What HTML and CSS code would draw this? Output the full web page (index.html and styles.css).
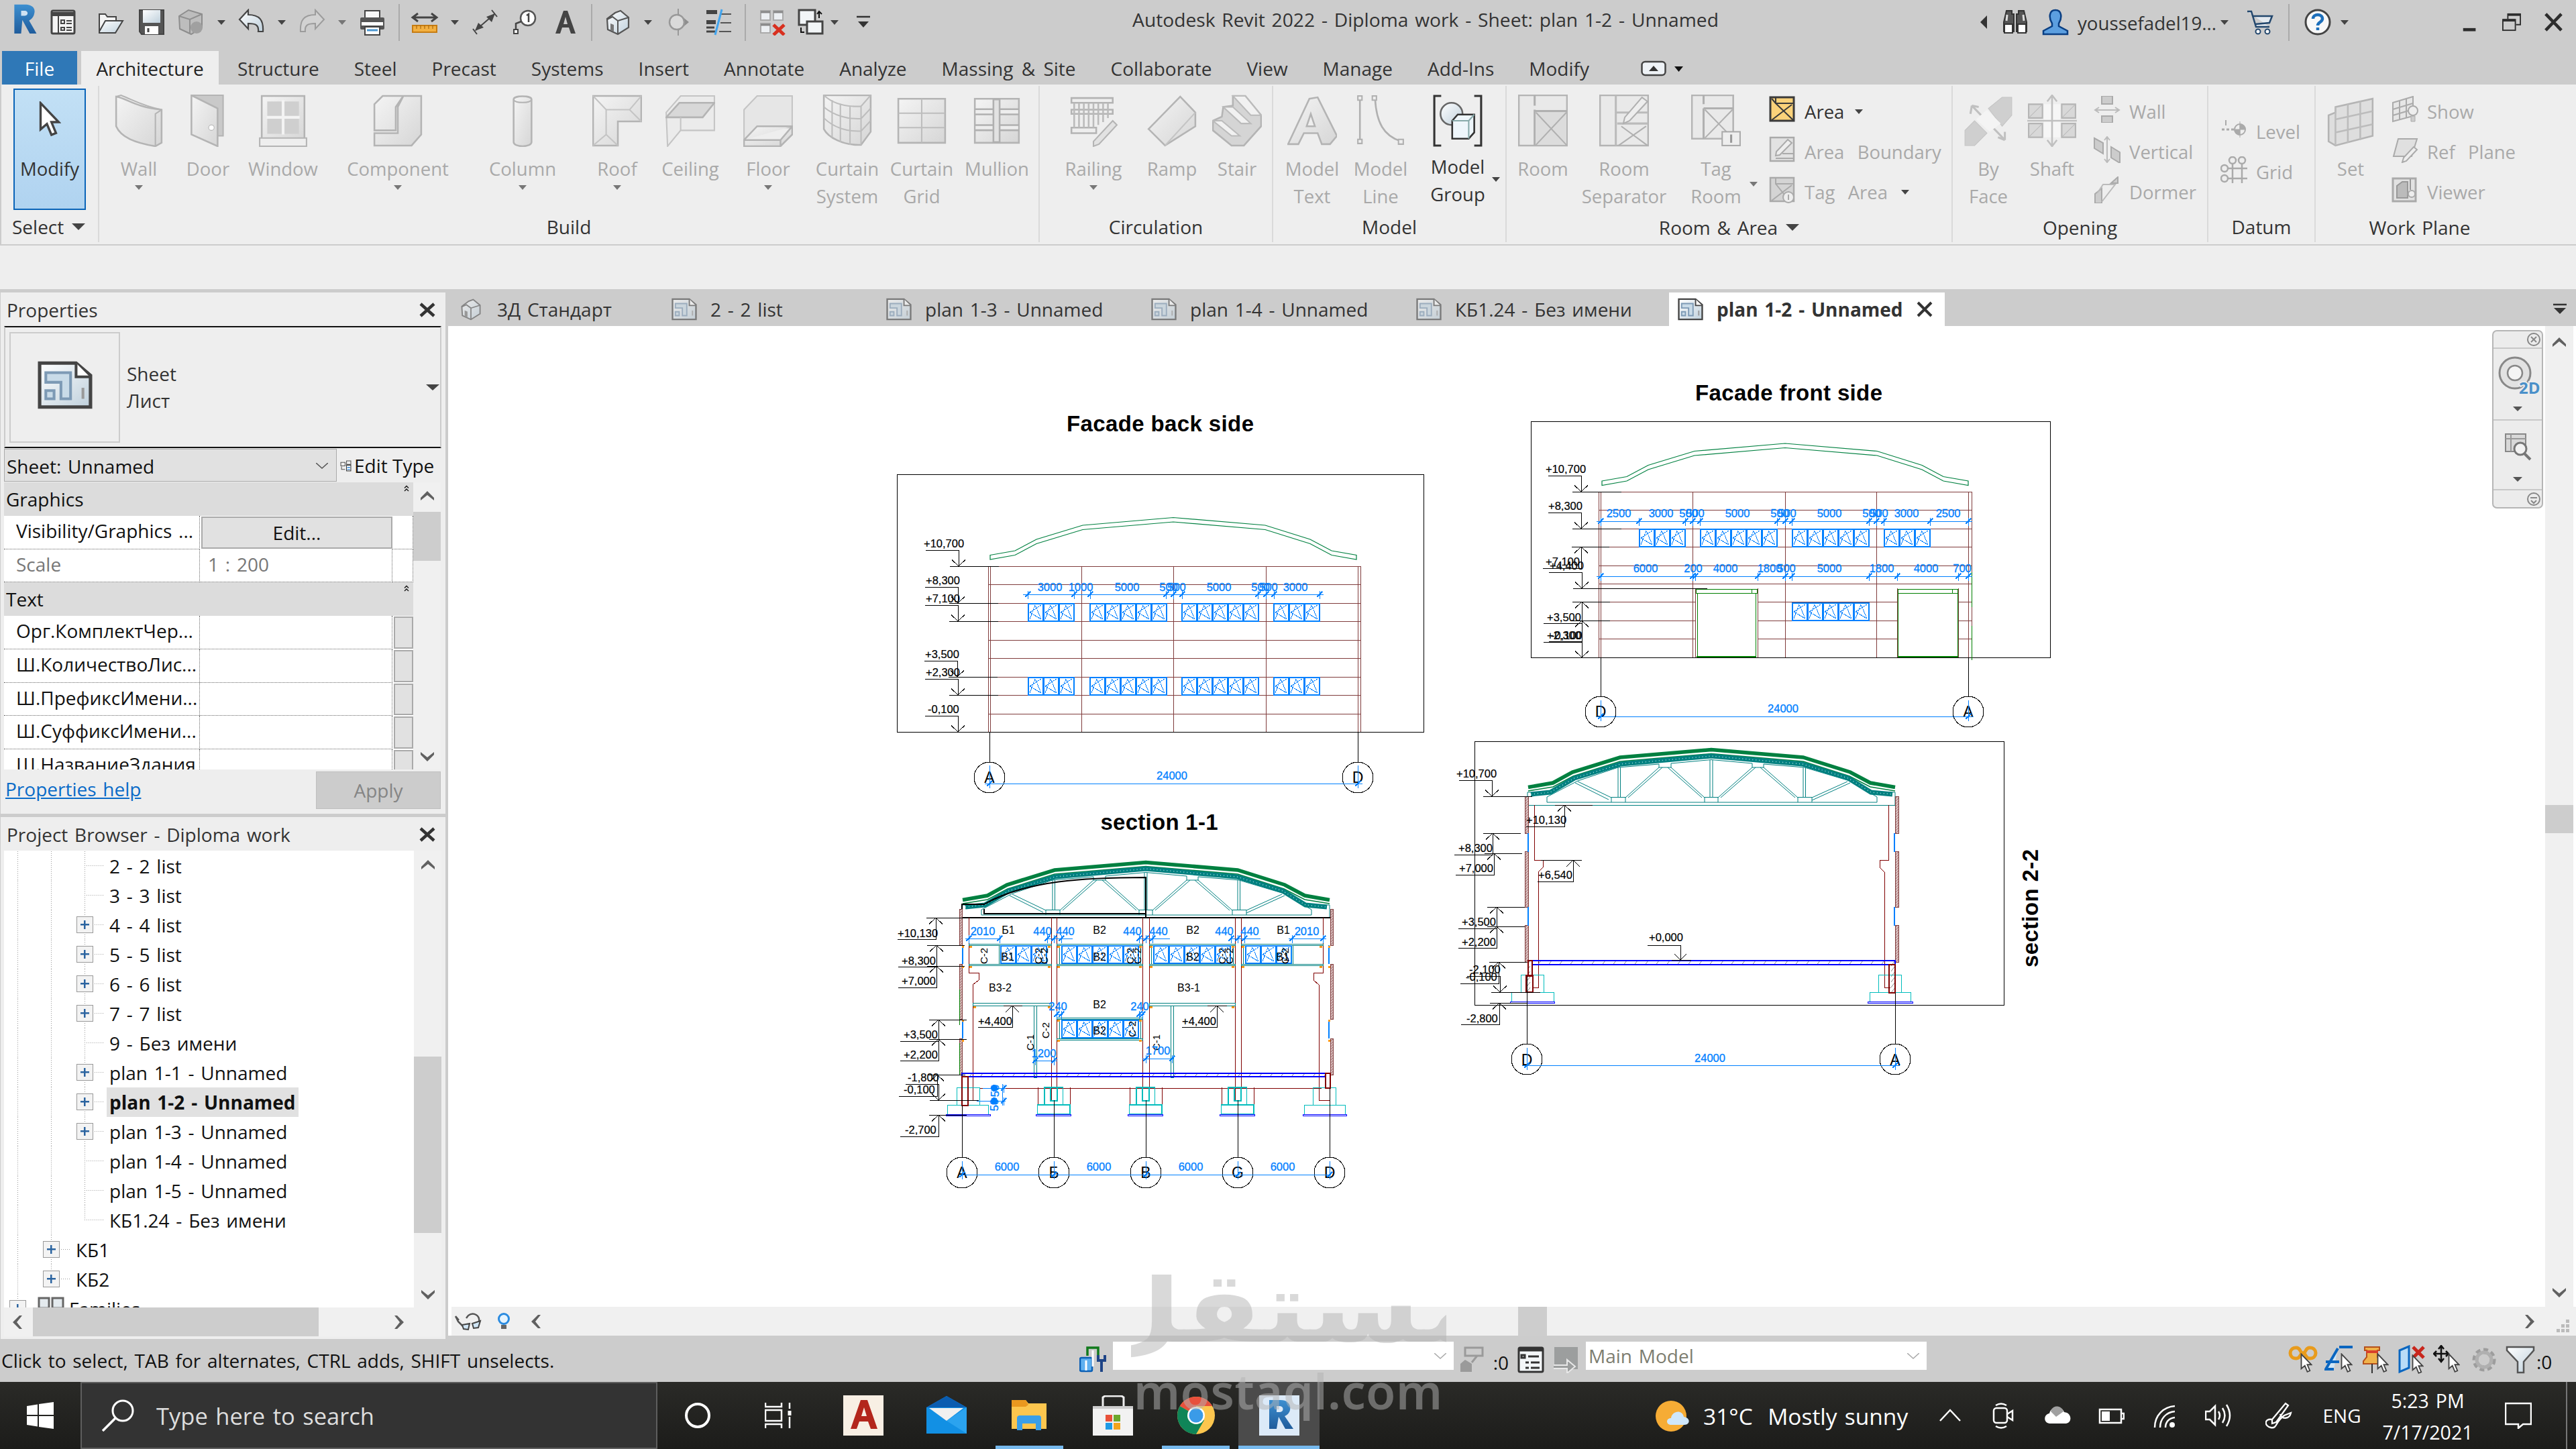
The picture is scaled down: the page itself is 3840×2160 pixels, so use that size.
FILE: index.html
```html
<!DOCTYPE html>
<html lang="en">
<head>
  <meta charset="UTF-8">
  <title>Autodesk Revit 2022 - Diploma work</title>
  <link rel="stylesheet" href="styles.css">
</head>
<body>
  <svg class="defs" width="0" height="0">
    <defs>
      <linearGradient id="gDis" x1="0" y1="0" x2="1" y2="1"><stop offset="0" stop-color="#f4f4f4"/><stop offset="1" stop-color="#d6d6d6"/></linearGradient>
      <linearGradient id="gIce" x1="0" y1="0" x2="1" y2="1"><stop offset="0" stop-color="#ffffff"/><stop offset="1" stop-color="#bfd0dc"/></linearGradient>
      <linearGradient id="gBlue" x1="0" y1="0" x2="0" y2="1"><stop offset="0" stop-color="#3d8fd0"/><stop offset="1" stop-color="#1f5c9c"/></linearGradient>
      <symbol id="sheet" viewBox="0 0 40 36">
        <path d="M1.5 2H28L38.500 11V34H1.500Z" fill="url(#gIce)" stroke="currentColor" stroke-width="2.500"/>
        <path d="M28 2V12H38" fill="#fff" stroke="currentColor" stroke-width="2"/>
        <path d="M6 9H24V28H17V16H6Z M6 22H12V28H6Z" fill="#c9dbe8" stroke="#7d9ab5" stroke-width="2"/>
        <path d="M33 20V28" stroke="#999" stroke-width="2"/>
      </symbol>
      <symbol id="house" viewBox="0 0 40 40">
        <path d="M4 15L16 6L24 3L36 13V28L20 38L5 31Z" fill="url(#gIce)" stroke="#555" stroke-width="2.200"/>
        <path d="M20 38V18L36 13M20 18L12 12L4 16" fill="none" stroke="#555" stroke-width="2"/>
        <path d="M9 22L14 24V34L9 32Z" fill="#777"/>
      </symbol>
      <symbol id="cursor" viewBox="0 0 24 40"><path d="M2 2V31L9 25L14 37L19 35L14 23H22Z" fill="#fff" stroke="#444" stroke-width="2.500"/></symbol>
      <symbol id="chev" viewBox="0 0 20 14"><path d="M0 10L10 0L20 10V14L10 6L0 14Z" fill="#606060"/></symbol>
      <symbol id="fold" viewBox="0 0 8 10"><path d="M1 4.500L4 1.500L7 4.500M1 9L4 6L7 9" fill="none" stroke="#111" stroke-width="1.300"/></symbol>
      <!-- one glazed pane with opening marks -->
      <symbol id="pane" viewBox="0 0 24 28" overflow="visible">
        <rect x="1" y="1" width="22" height="26" fill="#fff" stroke="#0080ff" stroke-width="2.500"/>
        <path d="M3 14L20 3M3 14L20 24M3 24L11 3L20 24" fill="none" stroke="#0080ff" stroke-dasharray="5 1"/>
      </symbol>
      <g id="win3"><use href="#pane" width="24" height="28"/><use href="#pane" x="23" width="24" height="28"/><use href="#pane" x="46" width="24" height="28"/></g>
      <g id="win5"><use href="#win3"/><use href="#pane" x="69" width="24" height="28"/><use href="#pane" x="92" width="24" height="28"/></g>
      <g id="down"><path d="M-49.500 -23.500H0V0M-10 -9.500L0 0L10 -9.500M-13 0H60"/></g>
      <g id="up"><path d="M-57 32H0V0M-10 9.500L0 0L10 9.500M-14 0H42"/></g>
      <g id="tick"><path d="M0 -5V7M-4 4L4 -4" stroke="#0080ff"/><path d="M-4 4L4 -4" stroke="#0080ff" stroke-width="2"/></g>
      <g id="eave" fill="none" stroke="#008040" stroke-width="1.200" shape-rendering="auto">
        <path d="M-273 56L-236 49.500L-204 32.500L-135 11.500L0 0L137 11.500L204 32.500L236 49.500L273 56V62.500L236 56L204 39L137 18L0 6.500L-135 18L-204 39L-236 56L-273 62.500Z"/>
      </g>
      <g id="bubble"><circle r="23" fill="none" stroke="#000"/></g>
      <g id="truss" fill="none" shape-rendering="auto">
        <path d="M-273 58.500L-236 52L-207 36L-136 14L0 2.500L137 14L207 36L237 52L274 58.500" stroke="#008040" stroke-width="5.500"/>
        <path d="M-273 64L-236 58L-206 42L-136 20L0 8.500L137 20L206 42L237 58L274 64" stroke="#008040" stroke-width="1.500"/>
        <path d="M-269 69L-240 66L-204 45L-135 24L0 12L136 24L204 45L238 66L270 69" stroke="#008080" stroke-width="7"/>
        <path d="M-269 69L-240 66L-204 45L-135 24L0 12L136 24L204 45L238 66L270 69" stroke="#a8dada" stroke-width="1.500" stroke-dasharray="1 4"/>
        <g stroke="#008080">
          <path d="M-245 73L-199 49L-139 29L-78 24V29H-60V23L0 17.500L61 23V29H78V24L139 29L206 49L247 73V81H-245Z"/>
          <path d="M-139 29V74M-135.500 29V74M-2 18V74M2 18V74M137 29V74M140.500 29V74"/>
          <path d="M-149 81V73.500H-128V81M-10 81V73.500H10V81M129 81V73.500H150V81"/>
          <path d="M-128 74L-78 29M-124 74L-73 29M-60 29L-10 74M-65 29L-14 74M10 74L61 29M14 74L66 29M78 29L129 74M73 29L125 74M-199 50L-149 74M-203 52L-153 77M150 74L203 50M150 78L207 52"/>
          <path d="M-274 85V66H-245M274 85V66H250"/>
        </g>
      </g>
      <g id="footing" fill="none">
        <path d="M-24 -40V-14M24 -40V-14" stroke="#800000"/>
        <path d="M-14 -14V-40H13.500V-14M-24.500 -14H24V0H-24.500ZM-5 -40V-20H5V-40" stroke="#00bcbc" stroke-width="1.500"/>
        <rect x="-27" y="0" width="52" height="2" stroke="#00f"/>
      </g>
      <pattern id="hatch" width="16" height="8" patternUnits="userSpaceOnUse"><path d="M3 8L9 0" stroke="#888" fill="none"/></pattern>
      <pattern id="brick" width="4" height="4" patternUnits="userSpaceOnUse"><rect width="4" height="4" fill="#d8bcbc"/><path d="M0 4L4 0" stroke="#a07070" fill="none"/></pattern>
    </defs>
  </svg>

  <header class="titlebar">
    <div class="qat">
      <svg class="ico logo" viewBox="0 0 44 50"><path d="M5 2H22C36 2 40 10 37 18C35 25 30 27 29 28L41 49H30L18 27L16 49H5Z" fill="url(#gBlue)"/><path d="M16 12H22C28 12 28 20 22 20H16Z" fill="#cfe2f2"/></svg>
      <svg class="ico" viewBox="0 0 40 40"><rect x="3" y="3" width="34" height="34" rx="2" fill="#f4f4f4" stroke="#444" stroke-width="3"/><path d="M3 8H37" stroke="#444" stroke-width="6"/><path d="M13 8V37" stroke="#444" stroke-width="2"/><path d="M17 17h5v5h-5zM17 28h5v4h-5zM25 18h8M25 22h8M25 28h8M25 32h8" stroke="#444" fill="none" stroke-width="2"/></svg>
      <svg class="ico m14" viewBox="0 0 40 40"><path d="M3 34V8H12L15 12H28V18" fill="#f4f4f4" stroke="#444" stroke-width="2"/><path d="M3 34L12 18H38L27 36H3Z" fill="url(#gIce)" stroke="#444" stroke-width="2"/></svg>
      <svg class="ico m4" viewBox="0 0 40 40"><path d="M2 2H38V38H5L2 34Z" fill="#555" stroke="#444" stroke-width="2"/><rect x="7" y="2" width="26" height="19" fill="url(#gIce)"/><rect x="10" y="26" width="20" height="12" fill="#fff"/><path d="M15 29V35" stroke="#444" stroke-width="3"/></svg>
      <svg class="ico m2" viewBox="0 0 40 40"><path d="M2 11L16 2L36 8V28L20 38L3 30Z" fill="#bdbdbd" stroke="#8d8d8d" stroke-width="2"/><path d="M2 11L18 16L36 8M18 16V37" fill="none" stroke="#909090" stroke-width="2"/><circle cx="28" cy="28" r="9" fill="#a0a0a0"/></svg>
      <i class="tri"></i>
      <svg class="ico" viewBox="0 0 40 40"><path d="M2 16L15 2V9C32 9 38 17 37 34H30C31 25 27 22 15 22V30Z" fill="url(#gIce)" stroke="#444" stroke-width="2.200"/></svg>
      <i class="tri"></i>
      <svg class="ico" viewBox="0 0 40 40"><path d="M38 16L25 2V9C8 9 2 17 3 34H10C9 25 13 22 25 22V30Z" fill="#d2d2d2" stroke="#9c9c9c" stroke-width="2"/></svg>
      <i class="tri dim"></i>
      <svg class="ico" viewBox="0 0 40 40"><path d="M9 14V3H31V14" fill="#f7f7f7" stroke="#444" stroke-width="2"/><rect x="2" y="13" width="36" height="18" rx="2" fill="#555"/><rect x="4" y="20" width="32" height="5" fill="#fff"/><rect x="9" y="27" width="22" height="12" fill="#fff" stroke="#444" stroke-width="2"/><path d="M12 32H28" stroke="#4b97d1" stroke-width="3"/></svg>
      <span class="sep m4"></span>
      <svg class="ico m2" viewBox="0 0 40 40"><path d="M2 13H38M10 7L2 13L10 19M30 7L38 13L30 19" fill="none" stroke="#444" stroke-width="3"/><rect x="2" y="25" width="36" height="10" fill="#f3b041" stroke="#c67c12" stroke-width="2"/><path d="M8 25v5M14 25v5M20 25v5M26 25v5M32 25v5" stroke="#9a5b05"/></svg>
      <i class="tri"></i>
      <svg class="ico" viewBox="0 0 40 40"><path d="M6 32L34 8M2 30L8 38M30 2L38 12" stroke="#444" stroke-width="2"/><path d="M22 12L35 7L30 20ZM18 28L5 33L10 21Z" fill="#444"/></svg>
      <svg class="ico m4" viewBox="0 0 40 40"><circle cx="23" cy="14" r="11" fill="#fff" stroke="#555" stroke-width="2.500"/><path d="M13 19L5 22V32M21 10L24 8V20" fill="none" stroke="#444" stroke-width="2.500"/><rect x="2" y="31" width="6" height="6" fill="#fff" stroke="#444" stroke-width="2"/></svg>
      <svg class="ico m2" viewBox="0 0 40 40"><path d="M5 37L17 3H23L35 37H28L25 28H15L12 37ZM17 23H23L20 12Z" fill="#444"/></svg>
      <span class="sep m3"></span>
      <svg class="ico m3"><use href="#house"/></svg>
      <i class="tri"></i>
      <svg class="ico" viewBox="0 0 40 40"><path d="M20 0V40" stroke="#999" stroke-width="2"/><path d="M20 7L36 20L20 33Z" fill="#8e8e8e"/><circle cx="18" cy="20" r="11" fill="#dadada" stroke="#999" stroke-width="2.500"/></svg>
      <svg class="ico m4" viewBox="0 0 40 40"><path d="M1 5H17M1 20H15" stroke="#444" stroke-width="6"/><path d="M1 34H14M1 28H13" stroke="#444" stroke-width="3"/><path d="M22 8H38M22 21H38M20 34H38" stroke="#555" stroke-width="2"/><path d="M24 1L14 39" stroke="#41a4ee" stroke-width="3"/></svg>
      <span class="sep m3"></span>
      <svg class="ico m4" viewBox="0 0 40 40"><path d="M3 3H17V17H3ZM22 3H36V17H22ZM3 22H17V36H3Z" fill="#eceff2" stroke="#aaa" stroke-width="2"/><path d="M3 5H17M22 5H36M3 24H17" stroke="#888" stroke-width="3"/><path d="M22 24L38 39M38 24L22 39" stroke="#d8301f" stroke-width="5"/></svg>
      <svg class="ico" viewBox="0 0 40 40"><rect x="3" y="2" width="24" height="22" fill="#f2f5f7" stroke="#444" stroke-width="3"/><rect x="15" y="19" width="23" height="18" fill="#f2f5f7" stroke="#444" stroke-width="3"/><path d="M33 14V5M30 8L33 4L37 8M6 28V35H11" fill="none" stroke="#111" stroke-width="2"/></svg>
      <i class="tri mneg"></i>
      <svg class="custom" viewBox="0 0 20 20"><path d="M0 2H20" stroke="#333" stroke-width="2.500"/><path d="M2 9H18L10 18Z" fill="#333"/></svg>
    </div>
    <div class="caption">Autodesk Revit 2022 - Diploma work - Sheet: plan 1-2 - Unnamed</div>
    <div class="account">
      <svg class="w10" viewBox="0 0 10 20"><path d="M10 0V20L0 10Z" fill="#333"/></svg>
      <svg class="ico40 m22" viewBox="0 0 40 40"><path d="M7 3H15V8H18V34H3V20Z M25 3H33L37 20V34H22V8H25Z" fill="#555" stroke="#333" stroke-width="2"/><rect x="4" y="23" width="12" height="13" fill="#fff" stroke="#333" stroke-width="2"/><rect x="24" y="23" width="12" height="13" fill="#fff" stroke="#333" stroke-width="2"/><path d="M8 9L7 18M32 9L33 18" stroke="#ddd" stroke-width="3"/></svg>
      <svg class="ico40 m20" viewBox="0 0 40 40"><path d="M20 2C30 2 30 14 25 22V26L38 33V38H2V33L15 26V22C10 14 10 2 20 2Z" fill="#5c9fe0" stroke="#0a3f83" stroke-width="2.500"/></svg>
      <span class="user">youssefadel19...</span>
      <i class="tri"></i>
      <svg class="ico40 m26" viewBox="0 0 40 40"><path d="M1 4H7L14 27H34M10 11H38L34 21L13 23" fill="#e4eaf0" stroke="#23476d" stroke-width="2.500"/><circle cx="17" cy="34" r="3.500" fill="#fff" stroke="#23476d" stroke-width="2"/><circle cx="31" cy="34" r="3.500" fill="#fff" stroke="#23476d" stroke-width="2"/></svg>
      <span class="sep m22"></span>
      <svg class="ico40 m22" viewBox="0 0 40 40"><circle cx="20" cy="20" r="18" fill="#f8f8f8" stroke="#444" stroke-width="3"/><path d="M13 15C13 7 27 7 27 15C27 20 20 20 20 25M20 28V32" fill="none" stroke="#1d6fbb" stroke-width="4.500"/></svg>
      <i class="tri m14"></i>
      <svg class="winbtn min" viewBox="0 0 30 30"><path d="M4 27H24" stroke="#2d2d2d" stroke-width="5"/></svg>
      <svg class="winbtn" viewBox="0 0 30 30"><path d="M9 10V2H29V19H22" fill="none" stroke="#2d2d2d" stroke-width="2"/><path d="M9 3H29" stroke="#2d2d2d" stroke-width="4"/><rect x="1" y="11" width="20" height="17" fill="none" stroke="#2d2d2d" stroke-width="2"/><path d="M1 12H21" stroke="#2d2d2d" stroke-width="4"/></svg>
      <svg class="winbtn" viewBox="0 0 30 30"><path d="M3 2L28 28M28 2L3 28" stroke="#2d2d2d" stroke-width="5"/></svg>
    </div>
  </header>

  <nav class="tabs">
    <span class="file">File</span>
    <span class="active">Architecture</span><span>Structure</span><span>Steel</span><span>Precast</span><span>Systems</span><span>Insert</span><span>Annotate</span><span>Analyze</span><span>Massing &amp; Site</span><span>Collaborate</span><span>View</span><span>Manage</span><span>Add-Ins</span><span>Modify</span>
    <svg class="ribtoggle" viewBox="0 0 64 26"><rect x="1.500" y="2" width="35" height="20" rx="5" fill="#eef2f6" stroke="#444" stroke-width="2.500"/><path d="M12 16L19 8L26 16Z" fill="#333"/><path d="M50 9H63L56.500 17Z" fill="#111"/></svg>
  </nav>

  <section class="ribbon">
    <div class="panel p-select">
      <div class="tools">
        <div class="btn on"><svg class="pointer"><use href="#cursor"/></svg><span>Modify</span></div>
      </div>
      <h6>Select <i class="tri big"></i></h6>
    </div>
    <div class="panel p-build">
      <div class="tools">
        <div class="btn"><svg viewBox="0 0 72 76"><path d="M3 3C20 6 30 18 69 22V70L60 75C30 70 10 62 3 46Z" fill="url(#gDis)" stroke="#b4b4b4" stroke-width="2.500"/><path d="M60 75V28L69 22M3 3L10 1C28 8 40 16 69 22" fill="none" stroke="#b4b4b4" stroke-width="2"/></svg><span>Wall</span><i class="tri"></i></div>
        <div class="btn"><svg viewBox="0 0 72 76"><path d="M12 1H58V60H50" fill="#c9c9c9" stroke="#b4b4b4" stroke-width="2"/><path d="M12 1L50 20V75L12 58Z" fill="url(#gDis)" stroke="#b4b4b4" stroke-width="2.500"/><circle cx="41" cy="48" r="4" fill="#fff" stroke="#b4b4b4"/></svg><span>Door</span></div>
        <div class="btn"><svg viewBox="0 0 72 76"><rect x="5" y="2" width="62" height="66" fill="url(#gDis)" stroke="#b4b4b4" stroke-width="2.500"/><path d="M13 10H59V57H13Z" fill="#cfcfcf"/><path d="M36 8V58M12 33H60" stroke="#f3f3f3" stroke-width="4"/><path d="M2 63H70V75H2Z" fill="#eee" stroke="#b4b4b4" stroke-width="2"/></svg><span>Window</span></div>
        <div class="btn"><svg viewBox="0 0 72 76"><path d="M2 14L14 2H44L33 18V52H2Z M44 2H70V58L56 74H2V56H36V18Z" fill="url(#gDis)" stroke="#b4b4b4" stroke-width="2.500"/></svg><span>Component</span><i class="tri"></i></div>
        <div class="btn"><svg viewBox="0 0 72 76"><path d="M23 7C23 1 49 1 49 7V69C49 77 23 77 23 69Z" fill="url(#gDis)" stroke="#b4b4b4" stroke-width="2.500"/><path d="M23 7C23 13 49 13 49 7" fill="none" stroke="#b4b4b4" stroke-width="2"/></svg><span>Column</span><i class="tri"></i></div>
        <div class="btn"><svg viewBox="0 0 72 76"><path d="M1 2H71V39H37V74H1Z" fill="url(#gDis)" stroke="#b4b4b4" stroke-width="2.500"/><path d="M1 2L20 22H54L71 39M54 22L71 2M20 22V58L1 74M20 58L37 74" fill="none" stroke="#c4c4c4" stroke-width="2"/></svg><span>Roof</span><i class="tri"></i></div>
        <div class="btn"><svg viewBox="0 0 72 76"><path d="M1 26L22 2H71V52H22L3 75Z" fill="#ebebeb" stroke="#c4c4c4" stroke-width="2"/><path d="M20 12H71L54 33H1Z" fill="#d8d8d8" stroke="#b4b4b4" stroke-width="2.500"/><path d="M22 33V52" stroke="#c4c4c4" stroke-width="2"/></svg><span>Ceiling</span></div>
        <div class="btn"><svg viewBox="0 0 72 76"><path d="M1 22L20 2H71V48H20L1 66Z" fill="#e6e6e6" stroke="#c4c4c4" stroke-width="2"/><path d="M20 46H71L54 66H1ZM1 66V75H54L71 58V46M54 66V75" fill="url(#gDis)" stroke="#b4b4b4" stroke-width="2.500"/></svg><span>Floor</span><i class="tri"></i></div>
        <div class="btn"><svg viewBox="0 0 72 76"><path d="M2 1H70V54L56 73C30 74 8 62 2 50Z" fill="url(#gDis)" stroke="#b4b4b4" stroke-width="2.500"/><path d="M2 1C16 14 36 18 56 17L70 1M56 17V73M2 18C16 30 36 36 56 35L70 20M2 34C16 48 36 54 56 53L70 38M14 8V62M26 13V69M40 16V73" fill="none" stroke="#bdbdbd" stroke-width="2"/></svg><span>Curtain<br>System</span></div>
        <div class="btn"><svg viewBox="0 0 72 76"><path d="M2 6H70V70H2Z" fill="url(#gDis)" stroke="#b4b4b4" stroke-width="2.500"/><path d="M36 6V70M2 27H70M2 48H70" stroke="#bdbdbd" stroke-width="2"/></svg><span>Curtain<br>Grid</span></div>
        <div class="btn"><svg viewBox="0 0 72 76"><path d="M4 6H68V70H4Z" fill="url(#gDis)" stroke="#b4b4b4" stroke-width="2.500"/><path d="M4 25H68M4 48H68" stroke="#b0b0b0" stroke-width="10"/><path d="M5 25H67M5 48H67" stroke="#ededed" stroke-width="5"/><rect x="31" y="7" width="9" height="62" fill="#e2e2e2" stroke="#b0b0b0" stroke-width="2.500"/></svg><span>Mullion</span></div>
      </div>
      <h6>Build</h6>
    </div>
    <div class="panel p-circ">
      <div class="tools">
        <div class="btn"><svg viewBox="0 0 72 76"><path d="M4 5H64V12H4ZM4 22H64V28H4ZM4 48H40V56H4Z" fill="#eee" stroke="#b4b4b4" stroke-width="2.500"/><path d="M8 12V48M15 12V48M22 12V48M29 12V48M36 12V48M43 12V44M50 12V40M57 12V34" stroke="#bbb" stroke-width="2.500"/><path d="M64 38L70 44L44 72L36 75V68Z" fill="#e2e2e2" stroke="#b4b4b4" stroke-width="2"/></svg><span>Railing</span><i class="tri"></i></div>
        <div class="btn"><svg viewBox="0 0 72 76"><path d="M2 50L48 3L70 26V46L26 74Z" fill="url(#gDis)" stroke="#b4b4b4" stroke-width="2.500"/><path d="M26 74L70 26" stroke="#c4c4c4" stroke-width="2"/></svg><span>Ramp</span></div>
        <div class="btn"><svg viewBox="0 0 72 76"><path d="M1 38L14 32L16 18L30 16V2H48L71 30V46L46 74H28L1 52Z" fill="#d5d5d5" stroke="#b4b4b4" stroke-width="2.500"/><path d="M30 2H48L71 30H56ZM16 18H30L56 42H42ZM1 38H14L40 60H28Z" fill="#f1f1f1" stroke="#bbb" stroke-width="2"/></svg><span>Stair</span></div>
      </div>
      <h6>Circulation</h6>
    </div>
    <div class="panel p-model">
      <div class="tools">
        <div class="btn"><svg viewBox="0 0 72 76"><path d="M1 72L32 6L44 4L72 60L62 72H50L44 56H24L16 72ZM28 46H40L34 28Z" fill="url(#gDis)" fill-rule="evenodd" stroke="#b4b4b4" stroke-width="2.500"/></svg><span>Model<br>Text</span></div>
        <div class="btn"><svg viewBox="0 0 72 76"><path d="M6 6V68M28 6C30 40 40 60 66 68" fill="none" stroke="#b0b0b0" stroke-width="2.500"/><path d="M3 2h6v6h-6zM3 65h6v6h-6zM24 2h6v6h-6zM62 65h7v7h-7z" fill="#eee" stroke="#b0b0b0" stroke-width="2"/></svg><span>Model<br>Line</span></div>
        <div class="btn live"><svg viewBox="0 0 72 76"><path d="M12 2H2V74H12M60 2H70V74H60" fill="none" stroke="#333" stroke-width="3"/><circle cx="27" cy="28" r="16" fill="url(#gIce)" stroke="#666" stroke-width="2.500"/><path d="M28 38L36 29H60V55L52 64H28Z" fill="#eef6fb" stroke="#333" stroke-width="2.500"/><path d="M52 64V38H28M52 38L60 29" fill="none" stroke="#8aa" stroke-width="2"/></svg><span>Model<br>Group</span><i class="tri beside"></i></div>
      </div>
      <h6>Model</h6>
    </div>
    <div class="panel p-room">
      <div class="tools">
        <div class="btn"><svg viewBox="0 0 72 76"><path d="M1 1H71V74H1Z" fill="#e9e9e9" stroke="#b4b4b4" stroke-width="2.500"/><path d="M24 1V16M24 22V74M24 24H71" stroke="#b0b0b0" stroke-width="3"/><path d="M26 26H70V73H26Z" fill="#dcdcdc"/><path d="M26 26L70 73M70 26L26 73" stroke="#b0b0b0" stroke-width="2"/></svg><span>Room</span></div>
        <div class="btn"><svg viewBox="0 0 72 76"><path d="M1 1H71V74H1Z" fill="#e9e9e9" stroke="#b4b4b4" stroke-width="2.500"/><path d="M24 1V74M24 26H71M26 42H71" stroke="#bbb" stroke-width="3"/><path d="M28 74L68 46M70 74L32 46" stroke="#b0b0b0" stroke-width="2"/><path d="M62 4L70 10L44 38L35 42L37 33Z" fill="#eee" stroke="#b0b0b0" stroke-width="2"/></svg><span>Room<br>Separator</span></div>
        <div class="btn"><svg viewBox="0 0 72 76"><path d="M1 1H61V64H1Z" fill="#e9e9e9" stroke="#b4b4b4" stroke-width="2.500"/><path d="M18 1V14M18 20V64M18 20H61" stroke="#b0b0b0" stroke-width="3"/><path d="M20 22L60 63M60 22L20 63" stroke="#b0b0b0" stroke-width="2"/><rect x="45" y="54" width="26" height="20" fill="#eee" stroke="#aaa" stroke-width="2"/><path d="M58 58V70" stroke="#999" stroke-width="3"/></svg><span>Tag<br>Room</span><i class="tri beside"></i></div>
        <ul class="small">
          <li class="live"><svg viewBox="0 0 40 40"><rect x="2" y="2" width="35" height="35" fill="#fbd27a" stroke="#3a3a3a" stroke-width="3"/><path d="M10 3V11H37M10 11L36 36M34 13L4 36M4 4L10 11" fill="none" stroke="#3a3a3a" stroke-width="2"/></svg>Area <i class="tri"></i></li>
          <li><svg viewBox="0 0 40 40"><path d="M2 2H37V37H2Z" fill="#e2e2e2" stroke="#aaa" stroke-width="2.500"/><path d="M28 5L34 10L16 28L10 29L11 23ZM10 33H36M20 26H36" fill="#eee" stroke="#aaa" stroke-width="2"/></svg>Area&nbsp; Boundary</li>
          <li><svg viewBox="0 0 40 40"><path d="M2 2H37V37H2Z" fill="#d4d4d4" stroke="#aaa" stroke-width="2.500"/><path d="M10 3V11H37M10 11L30 36M34 13L4 36" fill="none" stroke="#aaa" stroke-width="2"/><circle cx="29" cy="31" r="8" fill="#eee" stroke="#aaa" stroke-width="2"/><path d="M29 27V35" stroke="#aaa" stroke-width="2"/></svg>Tag&nbsp; Area <i class="tri m20"></i></li>
        </ul>
      </div>
      <h6>Room &amp; Area <i class="tri big"></i></h6>
    </div>
    <div class="panel p-open">
      <div class="tools">
        <div class="btn"><svg viewBox="0 0 72 76"><path d="M36 20L56 4H70V30L56 46Z" fill="#cfcfcf" stroke="#c4c4c4"/><path d="M2 52L16 38L34 56L16 74H2Z" fill="#cfcfcf" stroke="#c4c4c4"/><path d="M12 16L60 66M12 16L10 28M12 16L22 18M60 66V54M60 66L50 62" stroke="#c0c0c0" stroke-width="3" fill="none"/><path d="M34 22L54 42L38 54L18 36Z" fill="#f4f4f4"/></svg><span>By<br>Face</span></div>
        <div class="btn"><svg viewBox="0 0 72 76"><path d="M2 14H22V34H2ZM50 14H70V34H50ZM2 42H22V62H2ZM50 42H70V62H50Z" fill="#d8d8d8" stroke="#b4b4b4" stroke-width="2"/><path d="M2 34L22 14M50 34L70 14M2 62L22 42M50 62L70 42" stroke="#bbb"/><path d="M24 14H48V62H24Z" fill="#f6f6f6"/><path d="M0 38H72M36 2V76M29 10L36 1L43 10M29 66L36 75L43 66" fill="none" stroke="#c0c0c0" stroke-width="2.500"/></svg><span>Shaft</span></div>
        <ul class="small">
          <li><svg viewBox="0 0 40 40"><path d="M12 0H28V12H12ZM12 30H28V40H12Z" fill="#ccc" stroke="#aaa" stroke-width="2"/><path d="M2 21H38M8 17L2 21L8 25M32 17L38 21L32 25" fill="none" stroke="#bbb" stroke-width="2"/></svg>Wall</li>
          <li><svg viewBox="0 0 40 40"><path d="M1 3L14 10V26L1 18ZM26 16L39 24V40L26 32Z" fill="#ccc" stroke="#aaa" stroke-width="2"/><path d="M20 1V39M16 6L20 1L24 6M16 34L20 39L24 34" fill="none" stroke="#bbb" stroke-width="2"/></svg>Vertical</li>
          <li><svg viewBox="0 0 40 40"><path d="M26 10L36 1V10ZM2 40V26L12 18V40Z" fill="#ccc" stroke="#aaa" stroke-width="2"/><path d="M12 38L32 12H14L6 24" fill="none" stroke="#bbb" stroke-width="2"/></svg>Dormer</li>
        </ul>
      </div>
      <h6>Opening</h6>
    </div>
    <div class="panel p-datum">
      <div class="tools">
        <ul class="small two">
          <li><svg viewBox="0 0 40 40"><path d="M2 20H20" stroke="#aaa" stroke-width="3" stroke-dasharray="4 3"/><path d="M8 6V14" stroke="#aaa" stroke-width="2"/><circle cx="29" cy="20" r="8" fill="#eee" stroke="#aaa" stroke-width="2"/><path d="M29 12V20H37C37 15 33 12 29 12M29 28V20H21C21 25 25 28 29 28M29 8V32" fill="#aaa" stroke="#aaa"/></svg>Level</li>
          <li><svg viewBox="0 0 40 40"><path d="M18 10V40M32 10V40M10 18H40M10 33H40" stroke="#aaa" stroke-width="2.500"/><g fill="#eee" stroke="#aaa" stroke-width="2.500"><circle cx="18" cy="6" r="5"/><circle cx="32" cy="6" r="5"/><circle cx="6" cy="18" r="5"/><circle cx="6" cy="33" r="5"/></g></svg>Grid</li>
        </ul>
      </div>
      <h6>Datum</h6>
    </div>
    <div class="panel p-work">
      <div class="tools">
        <div class="btn"><svg viewBox="0 0 72 76"><path d="M14 18L68 6V60L14 74L4 68V30L14 26Z" fill="#dedede" stroke="#b4b4b4" stroke-width="2.500"/><path d="M14 18V74M32 14V70M50 10V66M14 36L68 24M14 55L68 43" fill="none" stroke="#bcbcbc" stroke-width="2.500"/></svg><span>Set</span></div>
        <ul class="small">
          <li><svg viewBox="0 0 40 40"><path d="M2 10L32 1V30L2 38ZM12 7V35M22 4V32M2 20L32 11M2 29L32 20" fill="#e6e6e6" stroke="#aaa" stroke-width="2"/><circle cx="32" cy="22" r="7" fill="#eee" stroke="#aaa" stroke-width="2"/><path d="M29 30H35V38H29Z" fill="#ccc" stroke="#aaa"/></svg>Show</li>
          <li><svg viewBox="0 0 40 40"><path d="M10 4H38L30 30H3Z" fill="#e0e0e0" stroke="#aaa" stroke-width="2"/><path d="M33 16L38 20L22 37L16 39L18 32Z" fill="#eee" stroke="#aaa" stroke-width="2"/></svg>Ref&nbsp; Plane</li>
          <li><svg viewBox="0 0 40 40"><path d="M2 3H36V37H2Z" fill="#e2e2e2" stroke="#aaa" stroke-width="3"/><path d="M8 14L16 8H24V32H8ZM28 4V20" fill="#bbb" stroke="#999" stroke-width="2"/><circle cx="30" cy="26" r="5" fill="#eee" stroke="#aaa" stroke-width="2"/></svg>Viewer</li>
        </ul>
      </div>
      <h6>Work Plane</h6>
    </div>
  </section>
  <div class="optbar"></div>

  <main class="work">
    <aside class="side">
      <section class="dock props">
        <h5>Properties <svg viewBox="0 0 24 22"><path d="M2 2L22 20M22 2L2 20" stroke="#333" stroke-width="4.500"/></svg></h5>
        <div class="type">
          <div class="thumb"><svg class="sheet"><use href="#sheet"/></svg></div>
          <p>Sheet<br>Лист</p>
          <i class="tri wide"></i>
        </div>
        <div class="inst">
          <div class="combo">Sheet: Unnamed <svg viewBox="0 0 18 9"><path d="M0 0L9 8L18 0" fill="none" stroke="#555" stroke-width="1.500"/></svg></div>
          <div class="edittype"><svg viewBox="0 0 16 16"><path d="M1 3H7V8H1ZM9 1H15V6H9ZM2 9V13H7" fill="none" stroke="#555"/><rect x="9" y="7" width="6" height="8" fill="#fff" stroke="#333"/><path d="M10 10H14M10 13H14" stroke="#0a6fd0"/></svg>Edit Type</div>
        </div>
        <div class="table">
          <div class="rows">
            <div class="group">Graphics<svg><use href="#fold"/></svg></div>
            <div class="row"><span>Visibility/Graphics ...</span><span class="button">Edit...</span><span></span></div>
            <div class="row gray"><span>Scale</span><span>1 : 200</span><span></span></div>
            <div class="group">Text<svg><use href="#fold"/></svg></div>
            <div class="row"><span>Орг.КомплектЧер...</span><span></span><span class="button"></span></div>
            <div class="row"><span>Ш.КоличествоЛис...</span><span></span><span class="button"></span></div>
            <div class="row"><span>Ш.ПрефиксИмени...</span><span></span><span class="button"></span></div>
            <div class="row"><span>Ш.СуффиксИмени...</span><span></span><span class="button"></span></div>
            <div class="row"><span>Ш.НазваниеЗдания</span><span></span><span class="button"></span></div>
          </div>
          <div class="vbar"><svg><use href="#chev"/></svg><b></b><svg class="dn"><use href="#chev"/></svg></div>
        </div>
        <footer><a>Properties help</a><button>Apply</button></footer>
      </section>
      <section class="dock browser">
        <h5>Project Browser - Diploma work <svg viewBox="0 0 24 22"><path d="M2 2L22 20M22 2L2 20" stroke="#333" stroke-width="4.500"/></svg></h5>
        <div class="table">
          <ul class="tree">
            <li><i></i><i></i><i class="t"></i><span>2 - 2 list</span></li>
            <li><i></i><i></i><i class="t"></i><span>3 - 3 list</span></li>
            <li><i></i><i></i><i class="t"><b></b></i><span>4 - 4 list</span></li>
            <li><i></i><i></i><i class="t"><b></b></i><span>5 - 5 list</span></li>
            <li><i></i><i></i><i class="t"><b></b></i><span>6 - 6 list</span></li>
            <li><i></i><i></i><i class="t"><b></b></i><span>7 - 7 list</span></li>
            <li><i></i><i></i><i class="t"></i><span>9 - Без имени</span></li>
            <li><i></i><i></i><i class="t"><b></b></i><span>plan 1-1 - Unnamed</span></li>
            <li><i></i><i></i><i class="t"><b></b></i><span class="sel">plan 1-2 - Unnamed</span></li>
            <li><i></i><i></i><i class="t"><b></b></i><span>plan 1-3 - Unnamed</span></li>
            <li><i></i><i></i><i class="t"></i><span>plan 1-4 - Unnamed</span></li>
            <li><i></i><i></i><i class="t"></i><span>plan 1-5 - Unnamed</span></li>
            <li><i></i><i></i><i class="t end"></i><span>КБ1.24 - Без имени</span></li>
            <li><i></i><i class="t"><b></b></i><span>КБ1</span></li>
            <li><i></i><i class="t end"><b></b></i><span>КБ2</span></li>
            <li><i class="t end"><b></b></i><svg class="fam" viewBox="0 0 40 36"><path d="M2 2H17V17H2ZM22 2H38V17H22ZM2 21H17V34H2Z" fill="#e4eaee" stroke="#666" stroke-width="3"/></svg><span>Families</span></li>
          </ul>
          <div class="vbar"><svg><use href="#chev"/></svg><b></b><svg class="dn"><use href="#chev"/></svg></div>
        </div>
        <div class="hbar"><svg class="lf"><use href="#chev"/></svg><b></b><svg class="rt"><use href="#chev"/></svg></div>
      </section>
    </aside>

    <section class="view">
      <nav class="docs">
        <span class="d1"><svg class="faded"><use href="#house"/></svg>3Д Стандарт</span>
        <span class="d2"><svg class="faded"><use href="#sheet"/></svg>2 - 2 list</span>
        <span class="d3"><svg class="faded"><use href="#sheet"/></svg>plan 1-3 - Unnamed</span>
        <span class="d3"><svg class="faded"><use href="#sheet"/></svg>plan 1-4 - Unnamed</span>
        <span class="d5"><svg class="faded"><use href="#sheet"/></svg>КБ1.24 - Без имени</span>
        <span class="active"><svg><use href="#sheet"/></svg>plan 1-2 - Unnamed<svg class="x" viewBox="0 0 24 24"><path d="M2 2L22 22M22 2L2 22" stroke="#333" stroke-width="4"/></svg></span>
        <svg class="more" viewBox="0 0 20 18"><path d="M0 2H20" stroke="#333" stroke-width="2.500"/><path d="M1 7H19L10 16Z" fill="#333"/></svg>
      </nav>
      <div class="canvas">
        <svg class="drawing" viewBox="668 486 3126 1462" shape-rendering="crispEdges">
          <g class="title">
            <text x="1729.500" y="643" textLength="279">Facade back side</text>
            <text x="2666.500" y="597" textLength="279">Facade front side</text>
            <text x="1728" y="1237" textLength="175">section 1-1</text>
            <text transform="translate(3038 1354) rotate(-90)" textLength="176">section 2-2</text>
          </g>

          <!-- back facade -->
          <rect class="frame" x="1337" y="707" width="785" height="384"/>
          <use href="#eave" x="1749" y="771.500"/>
          <path class="wall" d="M1473 844H2028M1473 871H2028M1473 899H2028M1473 926H2028M1473 954H2028M1473 981H2028M1473 1009H2028M1473 1036H2028M1473 1064H2028M1473 844V1091M1476 844V1091M1612 844V1091M1749 844V1091M1887 844V1091M2024 844V1091M2028 844V1091"/>
          <use href="#win3" x="1532" y="899"/><use href="#win5" x="1624" y="899"/><use href="#win5" x="1761" y="899"/><use href="#win3" x="1898" y="899"/>
          <use href="#win3" x="1532" y="1009"/><use href="#win5" x="1624" y="1009"/><use href="#win5" x="1761" y="1009"/><use href="#win3" x="1898" y="1009"/>
          <path class="dim" d="M1525 886H1973"/>
          <use href="#tick" x="1532" y="886"/><use href="#tick" x="1601" y="886"/><use href="#tick" x="1625" y="886"/><use href="#tick" x="1738" y="886"/><use href="#tick" x="1749" y="886"/><use href="#tick" x="1762" y="886"/><use href="#tick" x="1875" y="886"/><use href="#tick" x="1887" y="886"/><use href="#tick" x="1899" y="886"/><use href="#tick" x="1967" y="886"/>
          <g class="num"><text x="1565" y="881">3000</text><text x="1611" y="881">1000</text><text x="1680" y="881">5000</text><text x="1742" y="881">500</text><text x="1754" y="881">500</text><text x="1817" y="881">5000</text><text x="1879" y="881">500</text><text x="1891" y="881">500</text><text x="1931" y="881">3000</text></g>
          <g class="mark">
            <use href="#down" x="1429" y="844"/><use href="#down" x="1428" y="899"/><use href="#down" x="1428" y="926"/><use href="#down" x="1427" y="1009"/><use href="#down" x="1428" y="1036"/><use href="#down" x="1428" y="1091"/>
          </g>
          <g class="lev"><text x="1377" y="816">+10,700</text><text x="1380" y="871">+8,300</text><text x="1380" y="898">+7,100</text><text x="1379" y="981">+3,500</text><text x="1380" y="1008">+2,300</text><text x="1383" y="1063">-0,100</text></g>
          <path class="frame" d="M1475 1091V1136M2024 1091V1136"/>
          <use href="#bubble" x="1475" y="1159"/><use href="#bubble" x="2024" y="1159"/>
          <g class="axis"><text x="1475" y="1167">A</text><text x="2024" y="1167">D</text></g>
          <path class="dim" d="M1468 1168H2031M1475 1141V1174M2024 1141V1174"/>
          <use href="#tick" x="1475" y="1168"/><use href="#tick" x="2024" y="1168"/>
          <g class="num"><text x="1747" y="1162">24000</text></g>

          <!-- front facade -->
          <rect class="frame" x="2282" y="628" width="774" height="352"/>
          <use href="#eave" x="2661" y="661"/>
          <path class="wall" d="M2383 733H2939M2383 760H2939M2383 788H2939M2383 815H2939M2383 843H2939M2383 870H2939M2383 897H2527M2620 897H2828M2919 897H2939M2383 925H2527M2620 925H2828M2919 925H2939M2383 952H2527M2620 952H2828M2919 952H2939M2383 733V980M2386 733V980M2523 733V980M2661 733V980M2797 733V980M2934 733V980M2939 733V980M2527 877V980M2620 877V980M2828 877V980M2919 877V980"/>
          <use href="#win3" x="2443" y="788"/><use href="#win5" x="2534" y="788"/><use href="#win5" x="2671" y="788"/><use href="#win3" x="2808" y="788"/><use href="#win5" x="2671" y="898"/>
          <g class="door"><rect x="2528" y="878" width="91" height="6"/><path d="M2611 878V884M2530 884V980M2617 884V980M2910 878V884M2829 884V980M2918 884V980M2939 853V905M2939 933V984"/><rect x="2829" y="878" width="89" height="6"/><path d="M2529 979H2618M2829 979H2919" stroke-width="2"/></g>
          <path class="dim" d="M2380 777H2940M2380 859H2940"/>
          <use href="#tick" x="2386" y="777"/><use href="#tick" x="2443" y="777"/><use href="#tick" x="2512" y="777"/><use href="#tick" x="2523" y="777"/><use href="#tick" x="2534" y="777"/><use href="#tick" x="2649" y="777"/><use href="#tick" x="2661" y="777"/><use href="#tick" x="2671" y="777"/><use href="#tick" x="2786" y="777"/><use href="#tick" x="2797" y="777"/><use href="#tick" x="2808" y="777"/><use href="#tick" x="2877" y="777"/><use href="#tick" x="2934" y="777"/>
          <use href="#tick" x="2386" y="859"/><use href="#tick" x="2523" y="859"/><use href="#tick" x="2527" y="859"/><use href="#tick" x="2620" y="859"/><use href="#tick" x="2661" y="859"/><use href="#tick" x="2671" y="859"/><use href="#tick" x="2786" y="859"/><use href="#tick" x="2828" y="859"/><use href="#tick" x="2919" y="859"/><use href="#tick" x="2934" y="859"/>
          <g class="num"><text x="2413" y="771">2500</text><text x="2476" y="771">3000</text><text x="2517" y="771">500</text><text x="2527" y="771">500</text><text x="2590" y="771">5000</text><text x="2653" y="771">500</text><text x="2664" y="771">500</text><text x="2727" y="771">5000</text><text x="2790" y="771">500</text><text x="2801" y="771">500</text><text x="2842" y="771">3000</text><text x="2904" y="771">2500</text>
          <text x="2453" y="853">6000</text><text x="2524" y="853">200</text><text x="2572" y="853">4000</text><text x="2638" y="853">1800</text><text x="2663" y="853">500</text><text x="2727" y="853">5000</text><text x="2805" y="853">1800</text><text x="2871" y="853">4000</text><text x="2925" y="853">700</text></g>
          <g class="mark"><use href="#down" x="2357" y="733"/><use href="#down" x="2357" y="788"/><use href="#up" x="2357" y="815"/><use href="#down" x="2358" y="877"/><path d="M2358 877H2545"/><use href="#up" x="2358" y="897"/><use href="#up" x="2358" y="925"/><use href="#down" x="2358" y="980"/></g>
          <g class="lev"><text x="2304" y="705">+10,700</text><text x="2308" y="760">+8,300</text><text x="2304" y="843">+7,100</text><text x="2310" y="849">+4,400</text><text x="2306" y="926">+3,500</text><text x="2306" y="953">+2,300</text><text x="2312" y="953">-0,100</text></g>
          <path class="frame" d="M2386 980V1038M2934 980V1038"/>
          <use href="#bubble" x="2386" y="1061"/><use href="#bubble" x="2934" y="1061"/>
          <g class="axis"><text x="2386" y="1069">D</text><text x="2934" y="1069">A</text></g>
          <path class="dim" d="M2379 1068H2941M2386 1044V1074M2934 1044V1074"/>
          <use href="#tick" x="2386" y="1068"/><use href="#tick" x="2934" y="1068"/>
          <g class="num"><text x="2658" y="1062">24000</text></g>

          <!-- section 1-1 -->
          <use href="#truss" x="1708" y="1283"/>
          <path class="heavy" d="M1434 1368V1348H1467C1530 1312 1620 1308 1708 1308V1368M1467 1355V1362H1708M1433 1368H1983"/>
          <path class="post" d="M1444 1368V1450H1459V1461L1450 1468V1640H1434M1972 1368V1450H1958V1461L1966 1468V1640H1982M1567 1368V1640H1575V1368M1703 1368V1640H1713V1368M1841 1368V1640H1850V1368M1460 1622H1970"/>
          <g class="brick"><rect x="1430" y="1355" width="4" height="54"/><rect x="1430" y="1437" width="4" height="82"/><rect x="1430" y="1548" width="4" height="54"/><rect x="1983" y="1355" width="4" height="54"/><rect x="1983" y="1437" width="4" height="82"/><rect x="1983" y="1548" width="4" height="54"/></g>
          <path class="door" d="M1430 1475V1528M1430 1555V1602"/>
          <path class="glass" d="M1435 1409V1437M1435 1520V1548M1981 1409V1437M1981 1520V1548"/>
          <g class="beam"><rect x="1444" y="1407" width="123" height="2.500"/><rect x="1575" y="1407" width="128" height="2.500"/><rect x="1713" y="1407" width="128" height="2.500"/><rect x="1850" y="1407" width="122" height="2.500"/><rect x="1444" y="1437" width="123" height="2.500"/><rect x="1575" y="1437" width="128" height="2.500"/><rect x="1713" y="1437" width="128" height="2.500"/><rect x="1850" y="1437" width="122" height="2.500"/>
          <rect x="1575" y="1517" width="128" height="2.500"/><rect x="1575" y="1548" width="128" height="2.500"/><rect x="1450" y="1495" width="117" height="4"/><rect x="1713" y="1495" width="128" height="4"/><rect x="1541" y="1499" width="4" height="107"/><rect x="1745" y="1499" width="4" height="107"/>
          <path d="M1489 1410V1437M1579 1410V1437M1700 1410V1437M1716 1410V1437M1838 1410V1437M1853 1410V1437M1927 1410V1437M1579 1520V1548M1700 1520V1548"/></g>
          <g class="corbel"><path d="M1445 1411h4M1562 1411h4M1576 1411h4M1698 1411h4M1714 1411h4M1836 1411h4M1851 1411h4M1967 1411h4M1445 1441h4M1562 1441h4M1576 1441h4M1698 1441h4M1714 1441h4M1836 1441h4M1851 1441h4M1967 1441h4M1451 1501h4M1562 1501h4M1714 1501h4M1836 1501h4M1576 1521h4M1698 1521h4M1576 1551h4M1698 1551h4M1434 1411h3M1434 1441h3M1434 1521h3M1434 1551h3M1980 1411h3M1980 1441h3M1980 1521h3M1980 1551h3"/></g>
          <use href="#win3" x="1491" y="1409"/><use href="#win5" x="1582" y="1409"/><use href="#win5" x="1719" y="1409"/><use href="#win3" x="1856" y="1409"/><use href="#win5" x="1582" y="1520"/>
          <rect class="slab" x="1434" y="1600" width="542" height="5"/>
          <use href="#footing" x="1571" y="1661"/><use href="#footing" x="1708" y="1661"/><use href="#footing" x="1845" y="1661"/>
          <path class="cup" d="M1426 1647V1621H1460V1647M1412 1647H1473V1661H1412ZM1957 1647V1621H1991V1647M1944 1647H2005V1661H1944Z"/>
          <path class="blue" d="M1410 1661H1476V1663H1410ZM1942 1661H2007V1663H1942Z"/>
          <path class="block" d="M1434 1605H1443V1648H1434ZM1976 1600H1983V1622H1976Z"/>
          <g class="tag"><text x="1503" y="1392">Б1</text><text x="1639" y="1392">B2</text><text x="1778" y="1392">B2</text><text x="1913" y="1392">B1</text><text x="1502" y="1432">B1</text><text x="1639" y="1432">B2</text><text x="1778" y="1432">B2</text><text x="1912" y="1432">B1</text><text x="1491" y="1478">B3-2</text><text x="1772" y="1478">B3-1</text><text x="1639" y="1503">B2</text><text x="1639" y="1542">B2</text></g>
          <g class="rot"><text transform="translate(1472 1437) rotate(-90)">C-2</text><text transform="translate(1553 1437) rotate(-90)">C-2</text><text transform="translate(1562 1437) rotate(-90)">C-2</text><text transform="translate(1690 1437) rotate(-90)">C-2</text><text transform="translate(1701 1437) rotate(-90)">C-2</text><text transform="translate(1827 1437) rotate(-90)">C-2</text><text transform="translate(1838 1437) rotate(-90)">C-2</text><text transform="translate(1921 1437) rotate(-90)">C-2</text><text transform="translate(1564 1548) rotate(-90)">C-2</text><text transform="translate(1693 1546) rotate(-90)">C-2</text><text transform="translate(1541 1566) rotate(-90)">C-1</text><text transform="translate(1729 1566) rotate(-90)">C-1</text></g>
          <path class="dim" d="M1439 1399H1492M1560 1399H1599M1696 1399H1744M1833 1399H1879M1921 1399H1977M1573 1512H1584M1696 1512H1706M1540 1581H1576M1703 1578H1750M1465 1622H1499M1456 1641H1499M1494 1616V1648"/>
          <use href="#tick" x="1444" y="1399"/><use href="#tick" x="1490" y="1399"/><use href="#tick" x="1561" y="1399"/><use href="#tick" x="1571" y="1399"/><use href="#tick" x="1582" y="1399"/><use href="#tick" x="1698" y="1399"/><use href="#tick" x="1708" y="1399"/><use href="#tick" x="1718" y="1399"/><use href="#tick" x="1835" y="1399"/><use href="#tick" x="1845" y="1399"/><use href="#tick" x="1855" y="1399"/><use href="#tick" x="1926" y="1399"/><use href="#tick" x="1972" y="1399"/><use href="#tick" x="1575" y="1512"/><use href="#tick" x="1582" y="1512"/><use href="#tick" x="1698" y="1512"/><use href="#tick" x="1703" y="1512"/><use href="#tick" x="1543" y="1581"/><use href="#tick" x="1571" y="1581"/><use href="#tick" x="1708" y="1578"/><use href="#tick" x="1747" y="1578"/><use href="#tick" x="1496" y="1622"/><use href="#tick" x="1496" y="1641"/>
          <circle cx="1482" cy="1622" r="5" fill="#0080ff"/><circle cx="1482" cy="1641" r="5" fill="#0080ff"/>
          <g class="num"><text x="1465" y="1394">2010</text><text x="1554" y="1394">440</text><text x="1588" y="1394">440</text><text x="1688" y="1394">440</text><text x="1727" y="1394">440</text><text x="1825" y="1394">440</text><text x="1863" y="1394">440</text><text x="1948" y="1394">2010</text><text x="1577" y="1506">240</text><text x="1699" y="1506">240</text><text x="1556" y="1576">1200</text><text x="1726" y="1572">1700</text><text transform="translate(1489 1626) rotate(-90)">50</text><text transform="translate(1488 1647) rotate(-90)">50</text>
          <text x="1501" y="1745">6000</text><text x="1638" y="1745">6000</text><text x="1775" y="1745">6000</text><text x="1912" y="1745">6000</text></g>
          <g class="mark"><use href="#up" x="1395" y="1368"/><use href="#up" x="1396" y="1409"/><use href="#up" x="1396" y="1440"/><use href="#up" x="1399" y="1520"/><use href="#up" x="1399" y="1549"/><use href="#up" x="1397" y="1602"/><use href="#down" x="1399" y="1640"/><use href="#up" x="1399" y="1662"/><path d="M1509 1499V1531H1458M1499 1509L1509 1499L1519 1509M1496 1499H1524M1814 1499V1531H1762M1804 1509L1814 1499L1824 1509M1800 1499H1829"/></g>
          <g class="lev"><text x="1338" y="1397">+10,130</text><text x="1344" y="1438">+8,300</text><text x="1344" y="1468">+7,000</text><text x="1347" y="1548">+3,500</text><text x="1347" y="1578">+2,200</text><text x="1353" y="1612">-1,800</text><text x="1347" y="1630">-0,100</text><text x="1349" y="1690">-2,700</text><text x="1458" y="1528">+4,400</text><text x="1762" y="1528">+4,400</text></g>
          <path class="frame" d="M1434 1648V1725M1571 1640V1725M1708 1640V1725M1845 1640V1725M1982 1622V1725"/>
          <use href="#bubble" x="1434" y="1748"/><use href="#bubble" x="1571" y="1748"/><use href="#bubble" x="1708" y="1748"/><use href="#bubble" x="1845" y="1748"/><use href="#bubble" x="1982" y="1748"/>
          <g class="axis"><text x="1434" y="1756">А</text><text x="1571" y="1756">Б</text><text x="1708" y="1756">В</text><text x="1845" y="1756">G</text><text x="1982" y="1756">D</text></g>
          <path class="dim" d="M1432 1751H1984M1434 1731V1757M1571 1731V1757M1708 1731V1757M1845 1731V1757M1982 1731V1757"/>
          <use href="#tick" x="1434" y="1751"/><use href="#tick" x="1571" y="1751"/><use href="#tick" x="1708" y="1751"/><use href="#tick" x="1845" y="1751"/><use href="#tick" x="1982" y="1751"/>

          <!-- section 2-2 -->
          <rect class="frame" x="2198" y="1105" width="789" height="393"/>
          <use href="#truss" x="2551" y="1115"/>
          <path class="beam" d="M2278 1200H2825"/>
          <path class="post" d="M2287 1200V1282H2300V1293L2293 1300V1472H2285M2815 1200V1282H2802V1293L2809 1300V1472H2818"/>
          <g class="brick"><rect x="2273" y="1187" width="5" height="55"/><rect x="2273" y="1269" width="5" height="83"/><rect x="2273" y="1379" width="5" height="55"/><rect x="2825" y="1187" width="5" height="55"/><rect x="2825" y="1269" width="5" height="83"/><rect x="2825" y="1379" width="5" height="55"/></g>
          <path class="glass" d="M2278 1242V1270M2278 1352V1380M2824 1242V1270M2824 1352V1380"/>
          <rect class="slab" x="2284" y="1432" width="541" height="6"/>
          <path class="cup" d="M2267 1479V1453H2301V1479M2253 1479H2316V1493H2253ZM2800 1479V1453H2834V1479M2787 1479H2848V1493H2787Z"/>
          <path class="blue" d="M2251 1493H2317V1495H2251ZM2784 1493H2851V1495H2784Z"/>
          <path class="block" d="M2278 1432H2284V1455H2278ZM2275 1454H2285V1479H2275ZM2816 1438H2825V1480H2816Z"/>
          <g class="mark"><use href="#down" x="2224" y="1187"/><use href="#up" x="2332" y="1200"/><use href="#up" x="2225" y="1242"/><use href="#up" x="2227" y="1272"/><path d="M2345 1282V1314H2292M2335 1292L2345 1282L2355 1292M2297 1282H2358"/><use href="#up" x="2231" y="1352"/><use href="#up" x="2231" y="1381"/><path d="M2456 1409H2505V1431M2496 1422L2505 1431L2514 1422M2492 1431H2521"/><use href="#down" x="2236" y="1479"/><use href="#up" x="2234" y="1434"/><use href="#up" x="2235" y="1495"/></g>
          <g class="lev"><text x="2171" y="1159">+10,700</text><text x="2275" y="1228">+10,130</text><text x="2174" y="1270">+8,300</text><text x="2175" y="1300">+7,000</text><text x="2293" y="1310">+6,540</text><text x="2179" y="1380">+3,500</text><text x="2179" y="1410">+2,200</text><text x="2458" y="1403">+0,000</text><text x="2190" y="1451">-2,100</text><text x="2185" y="1462">-0,100</text><text x="2186" y="1524">-2,800</text></g>
          <path class="frame" d="M2276 1455V1556M2825 1480V1556"/>
          <use href="#bubble" x="2276" y="1579"/><use href="#bubble" x="2825" y="1579"/>
          <g class="axis"><text x="2276" y="1588">D</text><text x="2825" y="1588">A</text></g>
          <path class="dim" d="M2269 1588H2832M2276 1562V1595M2825 1562V1595"/>
          <use href="#tick" x="2276" y="1588"/><use href="#tick" x="2825" y="1588"/>
          <g class="num"><text x="2549" y="1583">24000</text></g>
        </svg>
        <div class="vbar"><svg><use href="#chev"/></svg><b></b><svg class="dn"><use href="#chev"/></svg></div>
        <div class="navbar">
          <svg viewBox="0 0 76 266">
            <rect x="1" y="1" width="74" height="264" rx="6" fill="#ececec" stroke="#b5b5b5" stroke-width="2"/>
            <path d="M2 27H74M2 134H74M2 238H74" stroke="#c8c8c8" stroke-width="2"/>
            <g fill="none" stroke="#888" stroke-width="2"><circle cx="62" cy="14" r="9"/><path d="M58 10L66 18M66 10L58 18"/><circle cx="62" cy="252" r="9"/><path d="M57 250H67M58 254L62 258L66 254"/></g>
            <circle cx="34" cy="64" r="23" fill="#e2e2e2" stroke="#888" stroke-width="3"/><circle cx="34" cy="64" r="11" fill="#f5f5f5" stroke="#888" stroke-width="2.500"/>
            <text x="40" y="95" font-size="24" font-weight="bold" fill="#4a90c9" stroke="#ececec" stroke-width="4" paint-order="stroke">2D</text>
            <path d="M31 114H45L38 121ZM31 219H45L38 226Z" fill="#555"/>
            <rect x="20" y="155" width="30" height="26" fill="#d8d8d8" stroke="#888" stroke-width="2"/><path d="M20 162H50M28 155V181" stroke="#999" stroke-width="2"/>
            <circle cx="42" cy="177" r="9" fill="#f2f2f2" stroke="#777" stroke-width="3"/><path d="M48 184L57 193" stroke="#777" stroke-width="4"/>
          </svg>
        </div>
      </div>
      <div class="hbar viewbar">
        <svg class="glasses" viewBox="0 0 40 30"><path d="M1 7L5 15L12 22M20 6C28 0 38 6 36 16M1 7L6 13M20 6L17 10" fill="none" stroke="#555" stroke-width="2.500"/><path d="M11 20L22 18L20 27L13 26ZM26 18L38 14L35 24L28 25Z" fill="#cfe5f5" stroke="#444" stroke-width="2"/></svg>
        <svg class="bulb" viewBox="0 0 20 28"><circle cx="10" cy="10" r="7.500" fill="#e5f4ff" stroke="#2a8be0" stroke-width="3"/><path d="M6 19H14V25H6Z" fill="#666"/></svg>
        <svg class="lf"><use href="#chev"/></svg><b></b><svg class="rt"><use href="#chev"/></svg>
        <svg class="grip" viewBox="0 0 20 20"><path d="M15 0h5v5h-5zM15 7h5v5h-5zM8 7h5v5h-5zM15 14h5v5h-5zM8 14h5v5h-5zM1 14h5v5h-5z" fill="#bbb"/></svg>
      </div>
    </section>
  </main>

  <footer class="status">
    <p>Click to select, TAB for alternates, CTRL adds, SHIFT unselects.</p>
    <svg class="s40" viewBox="0 0 40 40"><rect x="1" y="17" width="18" height="20" rx="2" fill="#5fb0f0" stroke="#0a5fb5" stroke-width="2.500"/><path d="M12 14V2H28V14" fill="none" stroke="#117a1c" stroke-width="3.500"/><path d="M10 21V36M20 6V30" stroke="#fff" stroke-width="3"/><path d="M28 13V21H38V13M33 20V38" fill="none" stroke="#1e4486" stroke-width="4"/></svg>
    <div class="field f1"><svg viewBox="0 0 18 9"><path d="M0 0L9 8L18 0" fill="none" stroke="#aaa" stroke-width="1.500"/></svg></div>
    <svg class="s36" viewBox="0 0 36 40"><path d="M8 2H34V14H8ZM26 14L18 24" fill="none" stroke="#9a9a9a" stroke-width="3"/><path d="M1 38V26L8 20L18 26V38Z" fill="#9a9a9a"/></svg>
    <span class="zero">:0</span>
    <svg class="s40 m13" viewBox="0 0 40 40"><rect x="2" y="2" width="36" height="36" rx="2" fill="#f3f6f8" stroke="#333" stroke-width="3"/><path d="M2 5H38" stroke="#333" stroke-width="5"/><path d="M6 13h5v4h-5zM16 15H32M12 24H17M20 24H33M12 32H17M20 32H33" stroke="#333" stroke-width="3" fill="none"/></svg>
    <svg class="s36 m14" viewBox="0 0 36 40"><path d="M1 1H36V34H1Z" fill="#9c9e9e"/><path d="M0 28H20V20L32 30L20 40V33H0" fill="#9c9e9e" stroke="#e8e8e8" stroke-width="2"/></svg>
    <div class="field f2">Main Model<svg viewBox="0 0 18 9"><path d="M0 0L9 8L18 0" fill="none" stroke="#aaa" stroke-width="1.500"/></svg></div>
    <div class="picks">
      <svg viewBox="0 0 44 44"><path d="M12 4C0 4 0 20 12 20C19 20 17 12 22 12C27 12 25 20 32 20C44 20 44 4 32 4C25 4 27 12 22 12C17 12 19 4 12 4Z" fill="none" stroke="#e89b1c" stroke-width="5"/><use href="#cursor" x="18" y="12" width="18" height="30"/></svg>
      <svg viewBox="0 0 44 44"><path d="M22 3H42M2 25H22M14 36H2L20 5" fill="#cfe6f7" stroke="#0a66c0" stroke-width="4"/><use href="#cursor" x="24" y="12" width="18" height="30"/></svg>
      <svg viewBox="0 0 44 44"><path d="M6 3H28V8H25V18L30 24V28H4V24L9 18V8H6Z" fill="#f0b24a" stroke="#b5501c" stroke-width="2"/><path d="M8 10H26" stroke="#d8402c" stroke-width="4"/><path d="M17 28V42" stroke="#333" stroke-width="2"/><use href="#cursor" x="24" y="12" width="18" height="30"/></svg>
      <svg viewBox="0 0 44 44"><path d="M4 8L18 2V34L4 40Z" fill="#b9dcf7" stroke="#0a66c0" stroke-width="3"/><path d="M24 3L40 19M40 3L24 19" stroke="#c8261c" stroke-width="5"/><use href="#cursor" x="22" y="14" width="18" height="30"/></svg>
      <svg viewBox="0 0 44 44"><path d="M12 2V24M1 13H23M8 6L12 1L16 6M8 20L12 25L16 20M5 9L1 13L5 17M19 9L23 13L19 17" fill="none" stroke="#111" stroke-width="2.500"/><use href="#cursor" x="22" y="12" width="18" height="30"/></svg>
      <svg viewBox="0 0 44 44"><circle cx="22" cy="22" r="13" fill="none" stroke="#9d9d9d" stroke-width="9" stroke-dasharray="6 4"/><circle cx="22" cy="22" r="11" fill="none" stroke="#b0b0b0" stroke-width="5"/></svg>
      <svg viewBox="0 0 44 44"><path d="M2 3H42V8L27 25V41H18V25L2 8Z" fill="url(#gIce)" stroke="#555" stroke-width="2.500"/></svg>
      <span>:0</span>
    </div>
  </footer>

  <footer class="taskbar">
    <div class="start"><svg viewBox="0 0 40 40"><path d="M0 6L16 3.500V19H0ZM18 3L40 0V19H18ZM0 21H16V36.500L0 34ZM18 21H40V40L18 37Z" fill="#fff"/></svg></div>
    <div class="search"><svg viewBox="0 0 48 48"><circle cx="31" cy="17" r="15" fill="none" stroke="#fff" stroke-width="3"/><path d="M20 28L1 47" stroke="#fff" stroke-width="3.500"/></svg>Type here to search</div>
    <div class="app"><svg class="t40" viewBox="0 0 40 40"><circle cx="20" cy="20" r="17" fill="none" stroke="#fff" stroke-width="4"/></svg></div>
    <div class="app"><svg class="t40" viewBox="0 0 40 40"><path d="M1 1V7H25V1M1 39V33H25V39M37 1V10M37 22V39" fill="none" stroke="#fff" stroke-width="2.500"/><rect x="1" y="12" width="24" height="16" fill="none" stroke="#fff" stroke-width="2.500"/><path d="M37 13V20" stroke="#fff" stroke-width="5"/></svg></div>
    <div class="app pin first"><svg viewBox="0 0 60 60"><rect width="60" height="60" fill="#f8efe4"/><path d="M11 50L26 7H36L51 50H41L37 39H24L20 50ZM27 31H35L31 18Z" fill="#b3261c"/></svg></div>
    <div class="app pin"><svg viewBox="0 0 60 60"><path d="M0 18L30 1L60 18V57H0Z" fill="#1290e4"/><path d="M0 18L30 1L60 18Z" fill="#0a5cb0"/><path d="M4 19H55L30 38Z" fill="#f0f0f0"/><path d="M30 38L60 18V57Z" fill="#2ba3ef"/></svg></div>
    <div class="app pin run"><svg viewBox="0 0 60 60"><path d="M3 7H24L28 12H55V50H3Z" fill="#fcc64e"/><path d="M3 7H24L28 14L24 17H3Z" fill="#ea981f"/><path d="M11 52V34C11 31 13 30 15 30H43C46 30 47 31 47 34V52H39V42H19V52Z" fill="#3a9fe8"/></svg></div>
    <div class="app pin"><svg viewBox="0 0 60 60"><path d="M15 17V3L18 1H43L46 3V17" fill="none" stroke="#eee" stroke-width="3"/><path d="M0 16H60V60H0Z" fill="#f2f2f2"/><path d="M0 16H60V20H0Z" fill="#ccc"/><path d="M19 29h10v10h-10z" fill="#e8513a"/><path d="M31 29h10v10h-10z" fill="#6da82d"/><path d="M19 41h10v10h-10z" fill="#1e9ae6"/><path d="M31 41h10v10h-10z" fill="#f2a41d"/></svg></div>
    <div class="app pin run"><svg viewBox="0 0 60 60"><circle cx="30" cy="30" r="28" fill="#fcc64e"/><path d="M30 30L5.800 16A28 28 0 0 1 54.200 16H30Z" fill="#e8503c"/><path d="M30 30L5.800 16A28 28 0 0 0 30 58L42 37Z" fill="#0f8558"/><circle cx="30" cy="30" r="13" fill="#fff"/><circle cx="30" cy="30" r="10.500" fill="#3a9be8"/></svg></div>
    <div class="app pin run cur"><svg viewBox="0 0 60 60"><rect width="60" height="60" fill="#dceaf8"/><path d="M15 7H32C50 7 50 27 38 31L51 50H39L29 32L26 50H15ZM26 16V25H31C37 25 37 16 31 16Z" fill="url(#gBlue)"/></svg></div>
    <div class="weather"><svg viewBox="0 0 52 50"><circle cx="24" cy="25" r="23" fill="#f6ac35"/><path d="M24 38C16 38 16 28 24 28C25 18 40 14 43 26C54 28 52 38 44 38Z" fill="#cfe7fb"/></svg>31°C&nbsp; Mostly sunny</div>
    <div class="cell"><svg viewBox="0 0 40 40"><path d="M5 28L20 12L35 28" fill="none" stroke="#fff" stroke-width="2.500"/></svg></div>
    <div class="cell"><svg viewBox="0 0 40 40"><path d="M8 5Q16 0 24 5M8 36Q16 41 24 36M25 18L33 13V27L25 22" fill="none" stroke="#fff" stroke-width="2.500"/><rect x="5" y="9" width="20" height="22" rx="4" fill="none" stroke="#fff" stroke-width="2.500"/></svg></div>
    <div class="cell"><svg viewBox="0 0 40 40"><path d="M8 32C-2 30 0 18 8 17C10 6 26 4 30 15C42 16 42 31 33 32Z" fill="#fff"/><path d="M10 14C12 4 26 4 29 14L18 22Z" fill="#a0a0a0"/></svg></div>
    <div class="cell"><svg viewBox="0 0 40 40"><path d="M3 11H35V31H3ZM36 17H39V25H36" fill="none" stroke="#fff" stroke-width="2.500"/><path d="M6 14H18V28H6Z" fill="#fff"/></svg></div>
    <div class="cell"><svg viewBox="0 0 40 40"><path d="M5 38C5 20 18 7 35 6M13 38C13 25 22 15 35 14M21 38C21 30 26 24 35 23" fill="none" stroke="#fff" stroke-width="2.500"/><circle cx="31" cy="34" r="4" fill="#fff"/></svg></div>
    <div class="cell"><svg viewBox="0 0 40 40"><path d="M1 14H7L15 6V34L7 26H1ZM20 14Q24 20 20 26M26 9Q33 20 26 31M32 4Q42 20 32 36" fill="none" stroke="#fff" stroke-width="2.500"/></svg></div>
    <div class="cell c100"><svg viewBox="0 0 40 40"><path d="M10 26L30 2L34 5L16 30L10 32ZM10 26C-2 24 -2 36 8 38C18 40 14 30 28 20L38 16C36 26 24 26 22 18" fill="none" stroke="#fff" stroke-width="2.300"/></svg></div>
    <div class="cell c88">ENG</div>
    <div class="clock">5:23 PM<br>7/17/2021</div>
    <div class="cell c102"><svg viewBox="0 0 40 40"><path d="M1 2H39V33H27L20 39V33H1Z" fill="none" stroke="#fff" stroke-width="2.500"/></svg></div>
    <div class="peek"></div>
  </footer>

  <div class="watermark">
    <svg viewBox="0 0 470 240">
      <text class="ar" transform="translate(235 100) scale(1.28 1.12)" lang="ar">مستقل</text>
      <text class="en" x="4" y="201" textLength="460">mostaql.com</text>
    </svg>
  </div>
</body>
</html>
```
FILE: styles.css
```css
* {
  box-sizing: border-box;
}
body {
  margin: 0;
  width: 3840px;
  height: 2160px;
  overflow: hidden;
  position: relative;
  display: flex;
  flex-direction: column;
  background: #ccc;
  color: #333;
  font-family: "Open Sans", "Noto Sans", sans-serif;
  font-size: 28px;
  word-spacing: 2.500px;
}
svg { display: block; flex: none; }
ul { list-style: none; margin: 0; padding: 0; }
h5, h6, p { margin: 0; font-weight: normal; }
.defs { position: absolute; }

.tri {
  display: inline-block;
  flex: none;
  border: 6px solid transparent;
  border-top: 7px solid #444;
  border-bottom: 0;
}
.tri.dim { border-top-color: #777; }
.tri.big { border-width: 10px 10px 0; margin-left: 12px; }
.tri.wide { border-width: 9px 10px 0; }
.sep { width: 2px; height: 55px; background: #aaa; flex: none; }
.m2 { margin-left: 2px; }
.m3 { margin-left: 3px; }
.m4 { margin-left: 4px; }
.m13 { margin-left: 13px; }
.m14 { margin-left: 14px !important; }
.m20 { margin-left: 20px !important; }
.m22 { margin-left: 22px; }
.m26 { margin-left: 27px; }
.mneg { margin-left: -5px !important; }

/* title bar */
.titlebar {
  height: 76px;
  display: flex;
  align-items: flex-start;
}
.qat {
  width: 1640px;
  height: 66px;
  padding-left: 15px;
  display: flex;
  align-items: center;
  gap: 13px;
}
.qat .ico { width: 44px; height: 40px; }
.qat .logo { height: 46px; margin-top: -10px; }
.qat .tri { margin: 0 4px; }
.qat .custom { width: 20px; height: 20px; margin-left: 10px; }
.caption {
  width: 970px;
  text-align: center;
  line-height: 58px;
  white-space: nowrap;
  font-size: 28.200px;
}
.account {
  padding-left: 342px;
  height: 66px;
  display: flex;
  align-items: center;
}
.w10 { width: 10px; height: 20px; }
.ico40 { width: 40px; height: 40px; }
.user { margin-left: 13px; width: 213px; white-space: nowrap; font-size: 27.700px; padding-top: 2px; }
.winbtn { width: 30px; height: 28px; margin-left: 32px; }
.winbtn.min { margin-left: 166px; }

/* ribbon tabs */
.tabs {
  height: 50px;
  display: flex;
  line-height: 53px;
  padding-left: 3px;
  font-size: 28px;
  word-spacing: 5px;
}
.tabs span { padding: 0 26px; white-space: nowrap; }
.tabs .file { width: 112px; padding: 0; text-align: center; background: #2f78b7; color: #fff; }
.tabs .active { margin-left: 6px; background: #eee; color: #222; padding: 0; width: 205px; text-align: center; }
.tabs .active + span { padding-left: 28px; }
.ribtoggle { width: 64px; height: 26px; margin: 14px 0 0 51px; }

.ribbon {
  height: 238px;
  display: flex;
  background: #eee;
  margin-left: 2px;
}
.panel {
  border-right: 2px solid #dadada;
  display: flex;
  flex-direction: column;
  margin: 2px 0 3px;
}
.panel:last-child { border: 0; }
.tools { height: 190px; display: flex; }
.panel h6 {
  font-size: 28px;
  line-height: 46px;
  text-align: center;
  display: flex;
  justify-content: center;
  align-items: center;
}
.p-select { width: 146px; padding-left: 18px; }
.p-select h6 { justify-content: flex-start; margin-left: -2px; }
.p-build { width: 1402px; }
.p-circ { width: 348px; }
.p-model { width: 348px; }
.p-room { width: 665px; }
.p-open { width: 381px; }
.p-datum { width: 160px; }
.p-work { width: 386px; }
.p-work h6 { margin-left: -76px; }

.btn {
  padding-top: 13px;
  text-align: center;
  color: #a9a9a9;
  display: flex;
  flex-direction: column;
  align-items: center;
  line-height: 41px;
  white-space: nowrap;
  font-size: 27.500px;
  position: relative;
}
.btn svg { width: 74px; height: 78px; }
.btn span { margin-top: 12px; }
.btn .tri { margin-top: 4px; border-top-color: #777; }
.btn .beside { position: absolute; right: 2px; top: 143px; margin: 0; }
.live, .btn.live { color: #333; }
.btn.live span { margin-top: 9px; }
.btn.live .beside { top: 136px; border-top-color: #444; }
.btn.on {
  width: 108px;
  height: 181px;
  margin-top: 4px;
  border: 2px solid #0a64b8;
  background: linear-gradient(#c2e0f5, #b0d3f0);
  color: #333;
}
.btn.on .pointer { width: 34px; height: 54px; margin: 4px 0 14px; }
.p-build .tools { display: grid; grid-template-columns: 110px 96px 128px 214px 158px 124px 94px 138px 98px 124px 100px; padding-left: 4px; }
.p-circ .tools { display: grid; grid-template-columns: 140px 94px 100px; padding-left: 10px; }
.p-model .tools { display: grid; grid-template-columns: 104px 100px 130px; padding-left: 6px; }
.p-room .tools { display: grid; grid-template-columns: 96px 146px 128px auto; padding-left: 6px; }
.p-open .tools { display: grid; grid-template-columns: 96px 94px auto; padding-left: 5px; }
.p-work .tools { display: grid; grid-template-columns: 104px auto; }

.small { padding: 8px 0 0 15px; color: #a9a9a9; font-size: 27.500px; }
.small li { height: 60px; display: flex; align-items: center; white-space: nowrap; }
.small svg { width: 40px; height: 40px; margin: -6px 13px 0 0; }
.small .tri { margin-left: 16px; }
.two { padding-top: 38px; padding-left: 18px; }
.p-work .small { padding-left: 9px; }

.optbar {
  height: 65px;
  margin-top: 2px;
  background: #eee;
}

/* work area */
.work {
  height: 1565px;
  display: flex;
}
.side { width: 668px; padding-top: 5px; }
.dock { width: 663px; background: #eee; margin-left: 1px; padding-left: 5px; }
.dock h5 {
  height: 50px;
  padding: 2px 15px 0 4px;
  font-size: 28px;
  display: flex;
  justify-content: space-between;
  align-items: center;
}
.dock h5 svg { width: 24px; height: 22px; }
.props { height: 777px; }
.type {
  width: 652px;
  height: 182px;
  border: 2px solid #ccc;
  border-top: 2px solid #111;
  border-bottom: 2px solid #111;
  padding: 6px 1px 6px 6px;
  display: flex;
  align-items: center;
}
.thumb {
  width: 165px;
  height: 165px;
  border: 2px solid #ccc;
  display: flex;
  align-items: center;
  justify-content: center;
}
.sheet { width: 82px; height: 74px; color: #444; margin-top: -6px; }
.type p { flex: 1; padding-left: 10px; line-height: 40px; }
.inst { display: flex; height: 51px; padding-top: 1px; color: #111; }
.combo {
  width: 496px;
  height: 49px;
  border: 1px solid #aaa;
  background: #e1e1e1;
  padding: 2px 12px 0 3px;
  display: flex;
  align-items: center;
  justify-content: space-between;
}
.combo svg { width: 18px; height: 9px; }
.edittype { display: flex; align-items: center; padding-left: 5px; white-space: nowrap; word-spacing: 0; }
.edittype svg { width: 17px; height: 17px; margin-right: 4px; }
.table { display: flex; }
.rows { width: 610px; height: 428px; overflow: hidden; background: #fff; color: #111; }
.group {
  height: 50px;
  line-height: 51px;
  background: #dcdcdc;
  padding: 0 6px 0 3px;
  display: flex;
  justify-content: space-between;
}
.group svg { width: 8px; height: 10px; margin-top: 4px; }
.row { display: grid; grid-template-columns: 292px 287px 31px; height: 49.700px; }
.row span {
  border-right: 1px dotted #666;
  border-bottom: 1px dotted #666;
  line-height: 45px;
  padding-left: 18px;
  white-space: nowrap;
  overflow: hidden;
}
.row span + span { padding-left: 12px; }
.row .button { border: 2px solid #aaa; background: #e1e1e1; padding: 0 !important; text-align: center; margin: 1px 0 1px 2px; }
.gray { color: #777; }
.vbar {
  width: 41px;
  background: #f0f0f0;
  display: flex;
  flex-direction: column;
  align-items: center;
}
.vbar svg, .hbar .lf, .hbar .rt { width: 20px; height: 14px; }
.vbar b, .hbar b { background: #cdcdcd; }
.vbar b { width: 100%; }
.dn { transform: rotate(180deg); margin-top: auto; }
.lf { transform: rotate(-90deg); }
.rt { transform: rotate(90deg); }
.props .vbar { padding: 13px 0 12px; }
.props .vbar b { height: 73px; margin-top: 17px; }
.props footer { display: flex; justify-content: space-between; padding: 3px 7px 0 2px; }
.props footer a { color: #0a6bc8; text-decoration: underline; line-height: 52px; }
.props button {
  width: 186px;
  height: 56px;
  border: 1px solid #bfbfbf;
  background: #ccc;
  color: #858585;
  font: inherit;
}
.browser { margin-top: 5px; height: 778px; }
.browser .table { height: 681px; }
.tree { width: 611px; height: 681px; overflow: hidden; background: #fff; color: #111; padding-top: 1px; }
.tree li { height: 44px; display: flex; align-items: center; }
.tree i {
  width: 50px;
  height: 44px;
  padding: 9px 0 0 8px;
  background: repeating-linear-gradient(#999 0 1px, transparent 1px 3px) 20px 0 / 1px 100% no-repeat;
}
.tree .t {
  background: repeating-linear-gradient(#999 0 1px, transparent 1px 3px) 20px 0 / 1px 100% no-repeat,
    repeating-linear-gradient(90deg, #999 0 1px, transparent 1px 3px) 20px 21px / 30px 1px no-repeat;
}
.tree .end { background-size: 1px 50%, 30px 1px; }
.tree b {
  display: block;
  width: 25px;
  height: 25px;
  border: 1px solid #999;
  background: linear-gradient(#2b64a0, #2b64a0) center / 13px 2.500px no-repeat, linear-gradient(#2b64a0, #2b64a0) center / 2.500px 13px no-repeat, #f3f3f3;
}
.tree span { padding: 0 4px; margin-left: 3px; line-height: 44px; white-space: nowrap; }
.tree .sel { background: #e1e1e1; font-weight: bold; }
.fam { width: 40px; height: 36px; }
.browser .vbar { padding: 14px 0 12px; }
.browser .vbar b { height: 263px; margin-top: 279px; }
.hbar { height: 43px; background: #f0f0f0; display: flex; align-items: center; }
.hbar b { height: 100%; }
.browser .hbar { width: 652px; padding-left: 10px; }
.browser .hbar b { width: 426px; margin: 0 110px 0 13px; }

/* drawing area */
.view { flex: 1; padding-top: 5px; }
.docs { height: 50px; display: flex; align-items: center; padding-left: 2px; }
.docs span { display: flex; align-items: center; height: 50px; padding-left: 12px; white-space: nowrap; }
.docs span svg { width: 40px; height: 34px; margin-right: 19px; color: #444; }
.docs .faded { opacity: 0.6; }
.d1 { width: 318px; }
.d2 { width: 320px; }
.d3 { width: 395px; }
.d5 { width: 390px; }
.docs .active { width: 411px; background: #fff; font-weight: bold; }
.docs span .x { width: 24px; height: 24px; margin: 0 0 0 20px; }
.docs .more { width: 20px; height: 18px; margin-left: 907px; }
.canvas { height: 1462px; display: flex; background: #fff; position: relative; }
.drawing { width: 3126px; height: 1462px; font-family: "Liberation Sans", Arial, sans-serif; word-spacing: 0; }
.canvas .vbar { width: 42px; padding: 17px 0 14px; }
.canvas .vbar b { height: 42px; margin-top: 683px; }
.navbar { position: absolute; left: 3047px; top: 6px; width: 76px; height: 266px; }
.viewbar { background: #f0f0f0; border-left: 5px solid #fff; }
.viewbar .glasses { width: 40px; height: 30px; margin-left: 5px; }
.viewbar .bulb { width: 20px; height: 28px; margin-left: 23px; }
.viewbar .lf { margin-left: 28px; }
.viewbar b { width: 43px; margin: 0 1455px 0 1454px; }
.grip { width: 20px; height: 20px; margin: 14px 0 0 29px; }

.title text { font-size: 33px; font-weight: bold; text-anchor: middle; }
.num text { font-size: 16.500px; fill: #0080ff; text-anchor: middle; stroke: #0080ff; stroke-width: 0.300px; }
.lev text { font-size: 16.500px; stroke: #000; stroke-width: 0.200px; }
.tag text { font-size: 16px; text-anchor: middle; }
.rot text { font-size: 15px; }
.axis text { font-size: 23px; text-anchor: middle; }
.frame { fill: none; stroke: #000; stroke-width: 1px; }
.wall { fill: none; stroke: #803c3c; stroke-width: 1px; }
.dim { fill: none; stroke: #0080ff; stroke-width: 1px; }
.mark { fill: none; stroke: #000; stroke-width: 1px; }
.door { fill: none; stroke: #008000; stroke-width: 1px; }
.heavy { fill: none; stroke: #000; stroke-width: 2px; shape-rendering: auto; }
.post { fill: none; stroke: #800000; stroke-width: 1px; }
.block { fill: url(#hatch); stroke: #800000; stroke-width: 2px; }
.brick { fill: url(#brick); stroke: #803c3c; stroke-width: 1px; }
.glass { fill: none; stroke: #0080ff; stroke-width: 2px; }
.beam { fill: none; stroke: #008080; stroke-width: 1px; }
.corbel { fill: none; stroke: #ff9a1a; stroke-width: 3px; }
.slab { fill: url(#hatch); stroke: #00f; stroke-width: 2px; }
.cup { fill: none; stroke: #00bcbc; stroke-width: 1px; }
.blue { fill: none; stroke: #00f; stroke-width: 1px; }

/* status bar */
.status { height: 64px; padding-top: 4px; display: flex; background: #ccc; color: #111; }
.status p { width: 1609px; padding-left: 2px; line-height: 57px; white-space: nowrap; }
.s40 { width: 40px; height: 40px; margin-top: 7px; }
.s36 { width: 36px; height: 40px; margin: 7px 0 0 9px; }
.field {
  height: 42px;
  background: #fff;
  display: flex;
  align-items: center;
  justify-content: space-between;
  padding: 0 11px 0 4px;
  color: #7d7d70;
}
.field svg { width: 18px; height: 9px; margin-left: auto; }
.f1 { width: 508px; margin-left: 10px; }
.f2 { width: 508px; margin-left: 12px; }
.zero { width: 37px; text-align: right; line-height: 62px; }
.picks { display: flex; margin-left: 539px; gap: 10px; padding-top: 5px; }
.picks svg { width: 44px; height: 44px; }
.picks span { line-height: 50px; margin-left: -8px; }

/* taskbar */
.taskbar { height: 100px; display: flex; background: linear-gradient(#2a2a27, #1c1c1a); color: #fff; font-size: 34px; }
.start { width: 120px; display: flex; align-items: center; justify-content: center; }
.start svg { width: 40px; height: 40px; }
.search {
  width: 860px;
  border: 2px solid #5e5e5e;
  background: #333;
  display: flex;
  align-items: center;
  padding-left: 30px;
  color: #ddd;
  font-size: 34.500px;
}
.search svg { width: 48px; height: 48px; margin-right: 33px; }
.app { width: 120px; display: flex; align-items: center; justify-content: center; }
.pin { width: 121px; margin-right: 3px; border-bottom: 5px solid transparent; padding-top: 5px; }
.first { margin-left: 6px; }
.pin svg { width: 60px; height: 60px; }
.run { width: 101px; margin: 0 13px 0 10px; border-color: #76b9ed; }
.cur.run { width: 121px; margin: 0; background: #4b4b4b; }
.t40 { width: 40px; height: 40px; }
.weather { width: 400px; margin-left: 500px; display: flex; align-items: center; white-space: nowrap; font-size: 33.500px; padding-top: 2px; }
.weather svg { width: 52px; height: 50px; margin-right: 20px; }
.cell { width: 80px; display: flex; align-items: center; justify-content: center; font-size: 28px; }
.cell svg { width: 40px; height: 40px; }
.c100 { width: 100px; }
.c88 { width: 88px; }
.c102 { width: 102px; }
.clock { width: 168px; text-align: center; font-size: 28.500px; line-height: 47px; padding-top: 5px; }
.peek { margin-left: 20px; width: 2px; background: #777; }

.watermark { position: absolute; left: 1686px; top: 1900px; width: 470px; height: 240px; opacity: 0.5; word-spacing: 0; }
.watermark svg { width: 470px; height: 240px; fill: #b4b4b4; }
.watermark .ar { font-family: "DejaVu Sans", sans-serif; font-weight: bold; font-size: 130px; text-anchor: middle; }
.watermark .en { font-family: "Noto Sans", sans-serif; font-weight: 600; font-size: 72px; }
```
